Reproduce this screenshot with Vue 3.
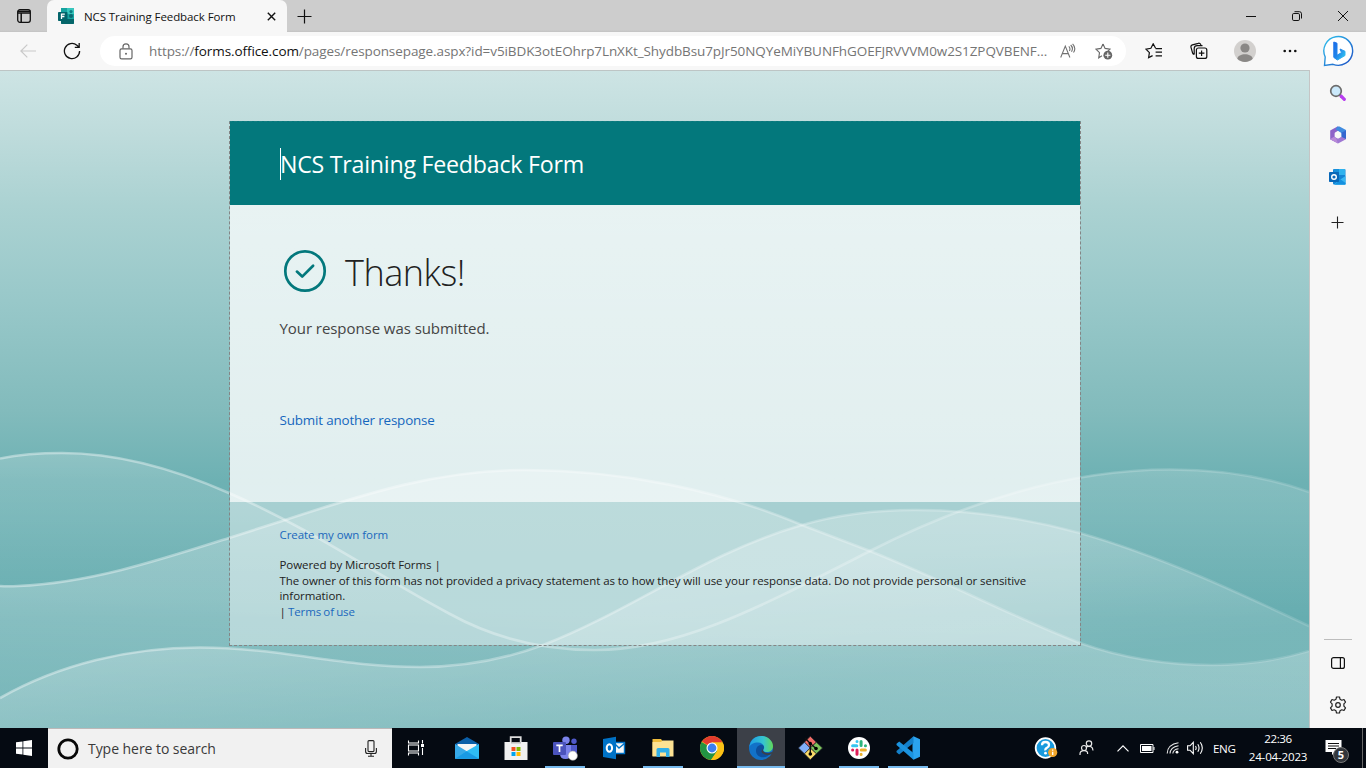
<script setup>
const waves = {
  a: 'M0 458.5C20 454.5 40 453 62 453C115 453 170 467 229 493C310 528 380 577 450 614C490 636 540 650 595 650C680 650 760 607 870 551C970 500 1070 469.5 1170 469.5C1220 469.5 1268 477 1309 492',
  b: 'M0 586Q8 586.5 18 586C90 583 160 560 229 538L282 521C370 492 440 470 525 470C620 470 720 490 802 525L870 551C950 583 1015 618 1080 643C1125 659 1170 665 1212 665C1250 665 1280 660 1309 651',
  c: 'M0 698C60 664 130 647.5 200 647.5C280 647.5 340 667 420 667C460 667 500 661 543 645C635 609 705 553 802 525C840 514 880 510 915 510C970 510 1025 518 1080 533C1160 556 1235 591 1309 626'
}
const area = (d) => d + 'V728H0Z'
</script>

<template>
  <div class="screen">
    <header class="tabstrip">
      <div class="tab-actions">
        <svg width="16" height="16" viewBox="0 0 16 16" fill="none" stroke="#111" stroke-width="1.3"><rect x="1.7" y="1.7" width="12.6" height="12.6" rx="2.2"/><path d="M1.7 3.2H14.3M1.7 5H14.3M5.2 5V14" stroke-width="1.5"/></svg>
      </div>
      <div class="tab">
        <svg class="forms" width="16" height="16" viewBox="0 0 16 16"><path d="M3 0H15a1 1 0 0 1 1 1V15a1 1 0 0 1-1 1H4a1 1 0 0 1-1-1Z" fill="#16a3a0"/><path d="M9 0H15a1 1 0 0 1 1 1V6H9Z" fill="#37c6bd"/><path d="M3 11H16V15a1 1 0 0 1-1 1H4a1 1 0 0 1-1-1Z" fill="#05666a"/><circle cx="13" cy="3.6" r="1.6" fill="#0b7b80"/><circle cx="13" cy="8" r="2" fill="#0b686f"/><rect y="4" width="9.5" height="9" rx=".8" fill="#03646a"/><path d="M3.5 11V6.2H6.8M3.5 8.5H6.4" fill="none" stroke="#fff" stroke-width="1.3"/></svg>
        <span class="tab-title">NCS Training Feedback Form</span>
        <svg class="tab-close" width="9" height="9" viewBox="0 0 9 9"><path d="M.8.8 8.2 8.2M8.2.8.8 8.2" stroke="#111" stroke-width="1.4"/></svg>
      </div>
      <svg class="new-tab" width="15" height="15" viewBox="0 0 15 15"><path d="M7.5.5V14.5M.5 7.5H14.5" stroke="#111" stroke-width="1.2"/></svg>
      <div class="window-buttons">
        <span><svg width="10" height="10" viewBox="0 0 10 10"><path d="M0 5.5H10" stroke="#111"/></svg></span>
        <span><svg width="10" height="10" viewBox="0 0 10 10" fill="none" stroke="#111"><rect x=".5" y="2.5" width="7" height="7" rx="1.3"/><path d="M2.5.7H7.4A2.1 2.1 0 0 1 9.5 2.8V7.5"/></svg></span>
        <span><svg width="10" height="10" viewBox="0 0 10 10"><path d="M0 0 10 10M10 0 0 10" stroke="#111"/></svg></span>
      </div>
    </header>

    <nav class="toolbar">
      <svg class="back" width="16" height="14" viewBox="0 0 16 14" fill="none" stroke="#c9c9c9" stroke-width="1.2"><path d="M16 7H1M7.3.6.9 7l6.4 6.4"/></svg>
      <svg class="reload" width="18" height="18" viewBox="0 0 18 18" fill="none" stroke="#111" stroke-width="1.3"><path d="M16.6 9A7.6 7.6 0 1 1 13.9 3.2L16.2 5.3M16.2 1V5.4H11.8"/></svg>
      <div class="address">
        <svg class="lock" width="14" height="17" viewBox="0 0 14 17" fill="none" stroke="#666" stroke-width="1.2"><rect x="1" y="5.8" width="12" height="10" rx="1.6"/><path d="M4 5.5V3.8a3 3 0 0 1 6 0V5.5"/><circle cx="7" cy="10.8" r="1" fill="#666" stroke="none"/></svg>
        <span class="url">https://<b>forms.office.com</b>/pages/responsepage.aspx?id=v5iBDK3otEOhrp7LnXKt_ShydbBsu7pJr50NQYeMiYBUNFhGOEFJRVVVM0w2S1ZPQVBENF...</span>
        <svg class="read" width="16" height="16" viewBox="0 0 16 16" fill="none" stroke="#717171" stroke-width="1.1"><path d="M.7 14.5 5.3 3.1 9.9 14.5M2.2 10.6H8.4M8.8 3.3Q10.8 5.3 9.4 8M10.7 2Q13.7 5.1 11.5 8.7M12.6.8Q16.5 5 13.5 9.5"/></svg>
        <svg class="fav" width="18" height="17" viewBox="0 0 18 17"><path d="M8 1 10.1 5.4 15 6.2 11.5 9.7M7 12.8 3.7 14.8 4.5 9.7 1 6.2 5.9 5.4 8 1" fill="none" stroke="#686868" stroke-width="1.1"/><circle cx="12.8" cy="12.2" r="4.4" fill="#666"/><path d="M12.8 9.6V14.8M10.2 12.2H15.4" stroke="#fff" stroke-width="1.1"/></svg>
      </div>
      <div class="tools">
        <svg width="18" height="16" viewBox="0 0 18 16" fill="none" stroke="#111" stroke-width="1.2"><path d="M10.6 5.2 8.2.8 5.9 5.3 1 6.1 4.4 9.6 3.6 14.6 7.6 12.6M10.6 5.6H17M10.6 9.2H17M10.6 12.8H17"/></svg>
        <svg width="18" height="18" viewBox="0 0 18 18" fill="none" stroke="#111" stroke-width="1.2"><rect x="6.4" y="6" width="10.4" height="10.4" rx="2"/><path d="M11.6 8.4V14M8.8 11.2H14.4M4.2 12.4A2 2 0 0 1 2.6 11L1 5.3A2 2 0 0 1 2.4 2.9L8.3 1.3A2 2 0 0 1 10.8 2.7L11.1 3.6M4.2 12.4V6.5A3 3 0 0 1 7.2 3.6H12.5"/></svg>
        <svg width="22" height="22" viewBox="0 0 22 22"><circle cx="11" cy="11" r="11" fill="#d2d0ce"/><circle cx="11" cy="8" r="4.6" fill="#8a8886"/><path d="M3.3 18.8C4 12.8 18 12.8 18.7 18.8A11 11 0 0 1 3.3 18.8Z" fill="#8a8886"/></svg>
        <svg width="14" height="4" viewBox="0 0 14 4" fill="#111"><circle cx="1.7" cy="2" r="1.3"/><circle cx="7" cy="2" r="1.3"/><circle cx="12.3" cy="2" r="1.3"/></svg>
      </div>
      <svg class="bing" width="32" height="32" viewBox="0 0 32 32"><defs><linearGradient id="bingRing" x1="0" y1="0" x2="1" y2="1"><stop stop-color="#2ec3ee"/><stop offset="1" stop-color="#1e4fc4"/></linearGradient><linearGradient id="bingB" x1="0" y1="0" x2="1" y2="1"><stop stop-color="#1b6ce8"/><stop offset=".5" stop-color="#2186ea"/><stop offset="1" stop-color="#35d0f0"/></linearGradient></defs><path d="M1.5 30.5 2.2 22A14.4 14.4 0 1 1 10 29.3Z" fill="#fff" stroke="url(#bingRing)" stroke-width="1.4"/><path d="M10.8 7 14 8.2V20.3L18.5 17.6 17 14 22 16.3V20.5L14.4 25 10.8 22.4Z" fill="url(#bingB)" stroke="url(#bingB)" stroke-linejoin="round"/></svg>
    </nav>

    <div class="content">
      <main class="page">
        <svg class="waves" width="1309" height="657" viewBox="0 71 1309 657">
          <defs>
            <linearGradient id="fa" gradientUnits="userSpaceOnUse" x1="0" y1="453" x2="0" y2="620"><stop stop-color="#fff" stop-opacity=".19"/><stop offset="1" stop-color="#fff" stop-opacity="0"/></linearGradient>
            <linearGradient id="fb" gradientUnits="userSpaceOnUse" x1="0" y1="590" x2="-6" y2="728"><stop stop-color="#fff" stop-opacity=".24"/><stop offset="1" stop-color="#fff" stop-opacity=".11"/></linearGradient>
            <linearGradient id="fc" gradientUnits="userSpaceOnUse" x1="0" y1="660" x2="14" y2="780"><stop stop-color="#fff" stop-opacity=".24"/><stop offset="1" stop-color="#fff" stop-opacity=".12"/></linearGradient>
            <linearGradient id="line" gradientUnits="userSpaceOnUse" x1="0" y1="0" x2="1309" y2="0"><stop stop-color="#fff" stop-opacity=".4"/><stop offset=".5" stop-color="#fff" stop-opacity=".3"/><stop offset="1" stop-color="#fff" stop-opacity=".14"/></linearGradient>
          </defs>
          <path :d="area(waves.a)" fill="url(#fa)"/>
          <path :d="area(waves.b)" fill="url(#fb)"/>
          <path :d="area(waves.c)" fill="url(#fc)"/>
          <g fill="none" stroke="url(#line)" stroke-width="2.6"><path :d="waves.a"/><path :d="waves.b"/><path :d="waves.c"/></g>
        </svg>
        <section class="card">
          <div class="card-head"><i class="caret"></i><h1>NCS Training Feedback Form</h1></div>
          <div class="card-body">
            <div class="thanks">
              <svg width="44" height="44" viewBox="0 0 44 44" fill="none" stroke="#03787c"><circle cx="22" cy="22" r="19.7" stroke-width="2.7"/><path d="M13.9 22.6 19.2 27.6 30.1 16.8" stroke-width="2.7" stroke-linecap="round" stroke-linejoin="round"/></svg>
              <h2>Thanks!</h2>
            </div>
            <p class="submitted">Your response was submitted.</p>
            <a class="again">Submit another response</a>
          </div>
          <footer class="card-foot">
            <a class="create">Create my own form</a>
            <p>Powered by Microsoft Forms |</p>
            <p>The owner of this form has not provided a privacy statement as to how they will use your response data. Do not provide personal or sensitive</p>
            <p>information.</p>
            <p class="terms">| <a>Terms of use</a></p>
          </footer>
        </section>
      </main>

      <aside class="sidebar">
        <svg class="s1" width="18" height="18" viewBox="0 0 18 18"><path d="M10.6 10.6 12.3 12.3" stroke="#777" stroke-width="2"/><path d="M12 12 15.3 15.3" stroke="#b83df0" stroke-width="3.2" stroke-linecap="round"/><circle cx="7" cy="7" r="5.3" fill="#cbe9fb" stroke="#6b6b6b" stroke-width="1.7"/></svg>
        <svg class="s2" width="18" height="18" viewBox="0 0 18 18"><path d="M8.5.4 1.2 4.6V13.2L5.8 15.6V6.8L12.5 2.5Z" fill="#8d63c8"/><path d="M8.5.4H10.5L17 4V12.7L12.3 10V7L6.5 3.3Z" fill="#3f8be0"/><path d="M17 8V13.2L9 17.6 1.2 13.2 5.8 10.7 9 12.5Z" fill="#9f78d3"/><path d="M17 4.5V13L12.3 10.7V6.7Z" fill="#3467cf"/><path d="M1.2 13.2 9 17.6 7 12 4.5 11Z" fill="#b88ad8"/><path d="M9 5.5 12.3 7.3V10.8L9 12.6 5.8 10.8V7.3Z" fill="#f7f7f7"/></svg>
        <svg class="s3" width="17" height="16" viewBox="0 0 17 16"><rect x="4" width="12.5" height="15.5" rx="1" fill="#1384d4"/><path d="M10 0H16V6H10Z" fill="#2fb2ee"/><path d="M5 0H10V5H5Z" fill="#1690dc"/><path d="M9 12 16.5 7V15a.7.7 0 0 1-.7.7H5Z" fill="#38b6f2"/><path d="M11 10 16.5 14V15.5H6Z" fill="#1490df"/><rect y="3" width="10" height="10" rx=".8" fill="#0968b8"/><circle cx="5" cy="8" r="2.3" fill="none" stroke="#fff" stroke-width="1.4"/></svg>
        <svg class="s4" width="13" height="13" viewBox="0 0 13 13"><path d="M6.5.5V12.5M.5 6.5H12.5" stroke="#222" stroke-width="1.1"/></svg>
        <i class="divider"></i>
        <svg class="s5" width="14" height="12" viewBox="0 0 14 12" fill="none" stroke="#111" stroke-width="1.2"><rect x=".6" y=".6" width="12.8" height="10.8" rx="2"/><path d="M9.4.5V11.5"/></svg>
        <svg class="s6" width="18" height="18" viewBox="0 0 18 18" fill="none" stroke="#222" stroke-width="1.2" stroke-linejoin="round"><path d="M7.5 1H10.5L11 3.2 12.8 4.2 15 3.5 16.5 6.1 14.9 7.8V10.2L16.5 11.9 15 14.5 12.8 13.8 11 14.8 10.5 17H7.5L7 14.8 5.2 13.8 3 14.5 1.5 11.9 3.1 10.2V7.8L1.5 6.1 3 3.5 5.2 4.2 7 3.2Z"/><circle cx="9" cy="9" r="2.3"/></svg>
      </aside>
    </div>

    <footer class="taskbar">
      <div class="cell"><svg width="16" height="16" viewBox="0 0 16 16" fill="#fff"><path d="M0 2.3 6.5 1.4V7.6H0ZM7.3 1.2 16 0V7.6H7.3ZM0 8.4H6.5V14.6L0 13.7ZM7.3 8.4H16V16L7.3 14.8Z"/></svg></div>
      <div class="search">
        <svg width="22" height="22" viewBox="0 0 22 22"><circle cx="11" cy="11" r="9.2" fill="none" stroke="#080808" stroke-width="2.8"/></svg>
        <span>Type here to search</span>
        <svg class="mic" width="12" height="17" viewBox="0 0 12 17" fill="none" stroke="#222" stroke-width="1.1"><rect x="3" y=".6" width="6" height="11" rx="1"/><path d="M.6 8V11.5Q.6 13.5 2.6 13.5H9.4Q11.4 13.5 11.4 11.5V8M6 13.5V16M3 16.2H9"/></svg>
      </div>
      <div class="cell"><svg width="18" height="16" viewBox="0 0 18 16" fill="none" stroke="#fff" stroke-width="1.1"><path d="M1.5.5V3H11.5V.5M1.5 15.5V13H11.5V15.5M1.5 5H11.5V11H1.5ZM15.5 0V3.5M15.5 8V15"/><path d="M14 4H17V7H14Z" fill="#fff" stroke="none"/></svg></div>
      <div class="apps">
        <div class="cell"><svg width="24" height="24" viewBox="0 0 24 24"><path d="M0 8 12 1 24 8V12H0Z" fill="#0b5fa8"/><path d="M2.5 8H21.5V14L12 18 2.5 14Z" fill="#f5f5f5"/><path d="M0 8 24 22.8H0Z" fill="#37a9e8"/><path d="M24 8V22.8H0L11 15.5Z" fill="#2ebcf4"/><path d="M11.5 15.3 24 22.8H0Z" fill="#199ae4"/></svg></div>
        <div class="cell"><svg width="24" height="24" viewBox="0 0 24 24"><path d="M6.7 8V1.2H16.7V8" fill="none" stroke="#ddd" stroke-width="1.8"/><path d="M.5 6H23.5V24H.5Z" fill="#f1f1f1"/><path d="M7 6H17V7.5H7Z" fill="#bbb"/><path d="M7.5 11H11.5V15H7.5Z" fill="#f25022"/><path d="M12.5 11H16.5V15H12.5Z" fill="#7fba00"/><path d="M7.5 16H11.5V20H7.5Z" fill="#00a4ef"/><path d="M12.5 16H16.5V20H12.5Z" fill="#ffb900"/></svg></div>
        <div class="cell open"><svg width="26" height="25" viewBox="0 0 26 25"><circle cx="14" cy="4.3" r="3.7" fill="#7b83eb"/><circle cx="22" cy="5.3" r="2.7" fill="#5059c9"/><path d="M17 9H25V15Q25 20 20 20H17Z" fill="#5059c9"/><path d="M8 9H19V17Q19 23 13.5 23T8 18Z" fill="#7b83eb"/><rect x="1" y="6" width="13" height="13" rx="1" fill="#4b53bc"/><path d="M4.3 9.4H10.7M7.5 9.4V16" stroke="#fff" stroke-width="1.7"/><circle cx="20.8" cy="19.7" r="4.6" fill="#fff" stroke="#aaa" stroke-width=".6"/></svg></div>
        <div class="cell"><svg width="24" height="24" viewBox="0 0 24 24"><path d="M12 6H23V18H12Z" fill="#f7f7f7"/><path d="M12 6.5H22.5V17.5H12M13 8 17 12 23 7" fill="none" stroke="#0072c6" stroke-width="1.4"/><path d="M1 3 14 .8V23.2L1 21Z" fill="#0072c6"/><ellipse cx="7.4" cy="12" rx="2.7" ry="3.8" fill="none" stroke="#fff" stroke-width="2"/></svg></div>
        <div class="cell open"><svg width="22" height="20" viewBox="0 0 22 20"><path d="M.5 1H9L10.5 3H21V18H.5Z" fill="#f0bd3c"/><path d="M.5 4H9L10.5 2.5H21.5V18.5H.5Z" fill="#fde293"/><path d="M4.5 19V11.5Q4.5 10 6 10H16Q17.5 10 17.5 11.5V19H14V14.5H8V19Z" fill="#31afe8"/></svg></div>
        <div class="cell"><svg width="24" height="24" viewBox="0 0 24 24"><circle cx="12" cy="12" r="12" fill="#fbc116"/><path d="M12 12 1.6 6A12 12 0 0 0 11 24L17.2 15Z" fill="#229342"/><path d="M12 12 2 5.4A12 12 0 0 1 22.4 6.2H12Z" fill="#e33b2e"/><path d="M11 24 17.2 15 17.2 9H12L22.8 6.8A12 12 0 0 1 11 24Z" fill="#fbc116"/><circle cx="12" cy="12" r="5.5" fill="#fff"/><circle cx="12" cy="12" r="4.4" fill="#3d7ff0"/></svg></div>
        <div class="cell open active"><svg width="24" height="24" viewBox="0 0 24 24"><defs><linearGradient id="edgeTop"><stop stop-color="#1e9de6"/><stop offset=".6" stop-color="#36c5cf"/><stop offset="1" stop-color="#62d957"/></linearGradient></defs><circle cx="12" cy="12" r="12" fill="#1272c8"/><path d="M.3 11C1.5 3.8 6.2 0 12 0 19 0 24 5 24 10.2 24 14 21.2 16 18 16 15 16 13.4 14.8 14.7 13 16.2 10.5 13.6 6.6 9 6.6 4.5 6.6 1.4 8.5.3 11Z" fill="url(#edgeTop)"/><path d="M7 15C7 10.8 10 8.6 12.6 8.7 14.5 9 15.8 11 14.5 13 13 15 15.3 16.8 18.2 16.8 20.5 16.8 22 16.2 22.7 16 20 20 16.5 21.3 14 21.3 10 21.2 7 18.5 7 15Z" fill="#0d4f9c"/><path d="M14.3 12C13 14.7 14.8 17.2 18.8 17.2 21 17.2 23 16 23.2 15.5L24 17 21.5 18.5Q15 20.5 12.3 15.5Z" fill="#3c4048"/></svg></div>
        <div class="cell"><svg width="25" height="24" viewBox="0 0 25 24"><g stroke="#20242b" stroke-width=".7"><path d="M12.3.3 18.4 6.2 12.3 12 6.4 6.2Z" fill="#f06c67"/><path d="M18.4 6.2 24.5 12 18.4 17.8 12.3 12Z" fill="#7dc35b"/><path d="M6.4 6.2 12.3 12 6.4 17.8.4 12Z" fill="#80aef8"/><path d="M12.3 12 18.4 17.8 12.3 23.7 6.4 17.8Z" fill="#fada69"/></g><path d="M7 2 12.3 7.5V18.3M12.3 7.5 18 12.5" stroke="#101010" stroke-width="1.4" fill="none"/><circle cx="12.3" cy="7.5" r="1.7"/><circle cx="12.3" cy="18" r="1.8"/><circle cx="18" cy="12.5" r="1.8"/></svg></div>
        <div class="cell open"><svg width="22" height="22" viewBox="0 0 22 22"><circle cx="11" cy="11" r="11" fill="#fff"/><g fill="none" stroke-width="3" stroke-linecap="round"><path d="M9 4.5V4.4M4.6 8.8H8.8" stroke="#36c5f0"/><path d="M13.1 4.4V8.6M17.5 8.8H17.4" stroke="#2eb67d"/><path d="M13.1 17.4V17.3M13.2 13.1H17.4" stroke="#ecb22e"/><path d="M9 13.1V17.3M4.6 13.1H4.7" stroke="#e01e5a"/></g></svg></div>
        <div class="cell open"><svg width="24" height="24" viewBox="0 0 24 24"><path d="M17.5.3 24 3.2V20.8L17.5 23.7 16.5 22V2Z" fill="#2ba3ee"/><path d="M17.5.3V7L3.2 18.5.5 16.2V15Z" fill="#1480ca"/><path d="M17.5 23.7V17L3.2 5.5.5 7.8V9Z" fill="#1b93df"/></svg></div>
      </div>
      <div class="tray">
        <svg class="help" width="24" height="22" viewBox="0 0 24 22"><circle cx="11.5" cy="11" r="9.8" fill="#189ade" stroke="#fff" stroke-width="1.8"/><path d="M8 8.3Q8 5 11.5 5T15 8Q15 9.8 13 10.8T11.5 13.3" fill="none" stroke="#fff" stroke-width="2.3"/><circle cx="11.5" cy="16.2" r="1.4" fill="#fff"/><circle cx="18.7" cy="15.5" r="4.6" fill="#f2a62b"/><path d="M18.7 14.8V18M18.7 12.6V13.8" stroke="#fff" stroke-width="1.3"/></svg>
        <svg class="people" width="15" height="16" viewBox="0 0 15 16" fill="none" stroke="#e8e8e8" stroke-width="1.2"><circle cx="10" cy="3.6" r="2.7"/><circle cx="5" cy="8" r="2.5"/><path d="M1 15V14Q1 10.7 5 10.7T8.6 14M6.8 6.8Q13.8 4.8 14 10.5"/></svg>
        <svg class="chev" width="12" height="7" viewBox="0 0 12 7" fill="none" stroke="#fff" stroke-width="1.2"><path d="M.5 6.4 6 .9 11.5 6.4"/></svg>
        <svg class="batt" width="15" height="9" viewBox="0 0 15 9"><path d="M.5.5H13V8.5H.5ZM14 3V6" fill="none" stroke="#fff"/><path d="M2 2H11.5V7H2Z" fill="#fff"/></svg>
        <svg class="wifi" width="13" height="12" viewBox="0 0 13 12" fill="none" stroke="#e8e8e8" stroke-width="1.1"><path d="M1.2 11.5Q1.5 2.5 12.5.8M4 11.5Q4.3 5.2 12.5 3.7M6.8 11.5Q7.2 7.3 12.5 6.7"/><circle cx="11" cy="10.2" r="1.4" fill="#fff" stroke="none"/></svg>
        <svg class="snd" width="17" height="14" viewBox="0 0 17 14" fill="none" stroke="#fff" stroke-width="1.1"><path d="M.6 4.8H3L6.3 1.3V12.7L3 9.2H.6ZM8.5 5Q9.8 7 8.5 9M10.8 3.2Q13.3 7 10.8 10.8M13.3 1.3Q17.3 7 13.3 12.7"/></svg>
        <span class="lang">ENG</span>
        <div class="clock"><span class="time">22:36</span><span class="date">24-04-2023</span></div>
        <div class="notif"><svg width="17" height="15" viewBox="0 0 17 15"><path d="M.5 0H16.5V12H10L7 15V12H.5Z" fill="#fff"/><path d="M3 3.5H14M3 6H14M3 8.5H11" stroke="#111" stroke-width="1"/></svg><b>5</b></div>
        <i class="peek"></i>
      </div>
    </footer>
  </div>
</template>

<style>
html, body { margin: 0; overflow: hidden; }
</style>

<style scoped>
* { box-sizing: border-box; }
.screen { width: 1366px; height: 768px; display: flex; flex-direction: column; overflow: hidden; font-family: "Open Sans", "Noto Sans", sans-serif; color: #111; white-space: nowrap; }
svg { display: block; flex: none; }
h1, h2, p { margin: 0; font-weight: 400; }

.tabstrip { height: 32px; flex: none; display: flex; align-items: center; background: linear-gradient(#cdcdcd 30px, #c2c2c2); }
.tab-actions { width: 47px; padding-left: 16px; }
.tab { width: 240px; height: 32px; display: flex; align-items: center; background: #f7f7f7; border-radius: 7px 7px 0 0; padding-left: 11px; }
.tab-title { margin-left: 10px; width: 183px; font-size: 11.5px; letter-spacing: -.09px; }
.new-tab { margin-left: 10px; }
.window-buttons { margin-left: auto; display: flex; }
.window-buttons span { width: 46px; display: flex; justify-content: center; }

.toolbar { height: 38px; flex: none; display: flex; align-items: center; background: #f7f7f7; }
.back { margin-left: 20px; }
.reload { margin-left: 27px; }
.address { width: 1026px; height: 30px; margin-left: 19px; border-radius: 15px; background: #fff; display: flex; align-items: center; padding-left: 19px; }
.url { width: 900px; margin-left: 16px; font-size: 13.5px; letter-spacing: -.09px; color: #757575; overflow: hidden; }
.url b { font-weight: 400; color: #111; }
.read { margin-left: 11px; }
.fav { margin-left: 19px; }
.tools { width: 152px; margin-left: 19px; display: flex; justify-content: space-between; align-items: center; }
.bing { margin-left: 26px; }

.content { height: 658px; flex: none; display: flex; }
.page { position: relative; width: 1309px; border-top: 1px solid #bdc5c5; padding: 50px 229px 0; background: linear-gradient(#cde4e4 0, #bfdcdc 60px, #abd2d2 135px, #98c8c9 230px, #82bbbc 340px, #6db1b3 410px, #66adb0 540px, #64acaf 657px); }
.waves { position: absolute; left: 0; top: 0; }
.card { position: relative; width: 852px; height: 525px; padding: 0 1px 1px; display: flex; flex-direction: column; }
.card::after { content: ""; position: absolute; inset: 0; border: 1px dashed #858585; border-top-color: #137d80; }
.card-head { height: 84px; background: #03787c; display: flex; align-items: center; padding: 2px 0 0 50px; color: #fff; }
.caret { width: 1px; height: 32px; margin-top: -1px; background: #fff; }
h1 { font-size: 23.2px; letter-spacing: -.24px; line-height: 32px; margin-left: -1px; }
.card-body { height: 297px; background: linear-gradient(rgba(255,255,255,.73), rgba(255,255,255,.8)); padding: 44px 0 0 49.5px; display: flex; flex-direction: column; align-items: flex-start; }
.thanks { height: 44px; display: flex; align-items: center; padding-left: 3.5px; }
h2 { font-size: 36px; font-weight: 350; letter-spacing: -.5px; margin-left: 18px; color: #212121; line-height: 44px; padding-top: 3px; }
.submitted { margin-top: 24px; height: 22px; line-height: 22px; font-size: 15px; letter-spacing: -.06px; color: #444; }
.again { margin-top: 71px; line-height: 20px; font-size: 13.4px; letter-spacing: -.15px; color: #1567be; }
.card-foot { height: 143px; background: rgba(255,255,255,.4); padding: 25px 0 0 49.5px; font-size: 11.5px; line-height: 15.6px; color: #222; letter-spacing: -.06px; }
.card-foot a { color: #1b68bd; }
.create { display: block; margin-bottom: 14.5px; }
.terms { word-spacing: -.8px; }

.sidebar { width: 57px; background: #f7f7f7; border-left: 1px solid #c5c5c5; display: flex; flex-direction: column; align-items: center; padding: 14px 1px 0 0; }
.s2 { margin-top: 24px; }
.s3 { margin-top: 25px; }
.s4 { margin-top: 31px; }
.divider { width: 28px; height: 1px; background: #bdbdbd; margin-top: 410px; }
.s5 { margin-top: 17px; }
.s6 { margin-top: 27px; }

.taskbar { height: 40px; flex: none; display: flex; background: #050a12; color: #fff; }
.cell { width: 48px; height: 40px; display: flex; align-items: center; justify-content: center; position: relative; }
.search { width: 344px; background: #f1f1f1; border-top: 1px solid #bcb8b8; display: flex; align-items: center; padding-left: 9px; color: #3a3a3a; }
.search span { font-size: 14px; margin-left: 9px; width: 277px; letter-spacing: -.05px; }
.apps { margin-left: 3px; display: flex; gap: 1px; }
.open::after { content: ""; position: absolute; left: 4px; right: 4px; bottom: 0; height: 2px; background: #76b9ed; }
.active { background: #3c4048; }
.active::after { left: 0; right: 0; }
.tray { flex: 1; display: flex; align-items: center; padding-left: 102px; font-size: 11.6px; }
.people { margin-left: 21px; }
.chev { margin-left: 23px; }
.batt { margin-left: 11px; }
.wifi { margin-left: 11px; }
.snd { margin-left: 8px; }
.lang { margin-left: 9px; width: 25px; letter-spacing: -.35px; }
.clock { width: 72px; margin-left: 4px; display: flex; flex-direction: column; align-items: center; line-height: 18px; }
.time { letter-spacing: -.4px; }
.date { letter-spacing: -.2px; }
.notif { position: relative; width: 26px; height: 30px; margin-left: 11px; padding-top: 7px; }
.notif b { position: absolute; left: 8px; top: 14px; width: 16px; height: 16px; border-radius: 50%; background: #32363c; border: 1px solid #777; font-size: 11px; line-height: 14px; text-align: center; }
.peek { width: 1px; height: 40px; margin-left: 11px; background: #666; }
</style>
